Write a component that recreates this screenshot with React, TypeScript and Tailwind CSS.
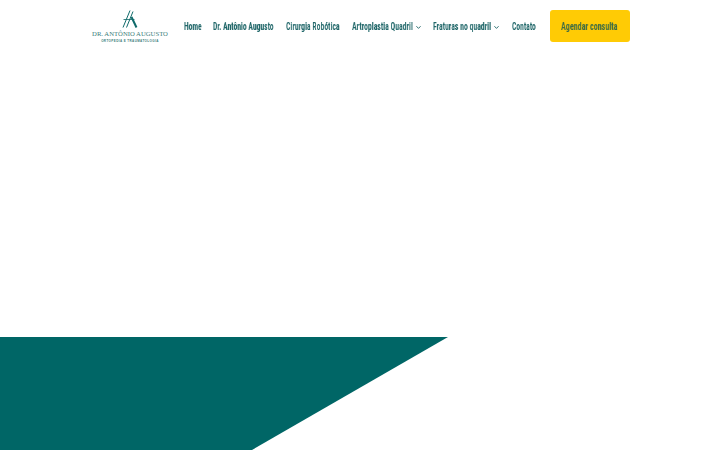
import React from "react";

const font = "[font-family:'Liberation_Sans_Narrow','Roboto_Condensed','Liberation_Sans',sans-serif]";

function Chevron() {
  return (
    <svg width="5" height="5" viewBox="0 0 5 5" className="ml-[3px] mt-[2px] shrink-0" fill="none" stroke="#1f6668" strokeWidth="0.9">
      <path d="M0.4 1.2 L2.5 3.4 L4.6 1.2" />
    </svg>
  );
}

function Logo() {
  return (
    <div className="flex w-[76px] flex-col items-center">
      <svg width="16" height="18" viewBox="0 0 16 18" fill="none" stroke="#0f6a6a">
        <path d="M1 17.5 L8 0.5" strokeWidth="1" />
        <path d="M4.5 17.5 L11 1.5" strokeWidth="1" />
        <path d="M9.5 7 L14.5 17.5" strokeWidth="2" />
        <path d="M1.5 9.5 H12.5" strokeWidth="0.8" />
      </svg>
      <div className="mt-[2px] whitespace-nowrap text-[6.7px] leading-[8px] text-[#3a7d7b] [font-family:'Liberation_Serif',serif]">
        DR. ANTÔNIO AUGUSTO
      </div>
      <div className="mt-[1px] whitespace-nowrap text-[3px] font-bold leading-[4px] tracking-[0.4px] text-[#3a7d7b] [font-family:'Liberation_Sans',sans-serif]">
        ORTOPEDIA E TRAUMATOLOGIA
      </div>
    </div>
  );
}

export default function App() {
  const label = "inline-block origin-left whitespace-nowrap text-[11.5px] font-bold text-[#1f6668] mt-px will-change-transform";
  return (
    <div className={`flex h-[450px] w-[720px] flex-col overflow-hidden bg-white ${font}`}>
      <header className="flex h-[52px] items-start pl-[92px] pt-[10px]">
        <Logo />
        <nav className="ml-[16px] flex h-[32px] items-center">
          <a className="flex w-[18px] items-center"><span className={`${label} scale-x-[.66]`}>Home</span></a>
          <a className="ml-[11px] flex w-[61px] items-center"><span className={`${label} scale-x-[.66]`}>Dr. Antônio Augusto</span></a>
          <a className="ml-[12px] flex w-[54px] items-center"><span className={`${label} scale-x-[.67]`}>Cirurgia Robótica</span></a>
          <a className="ml-[12px] flex w-[61px] items-center"><span className={`${label} scale-x-[.67]`}>Artroplastia Quadril</span></a>
          <Chevron />
          <a className="ml-[12px] flex w-[58px] items-center"><span className={`${label} scale-x-[.67]`}>Fraturas no quadril</span></a>
          <Chevron />
          <a className="ml-[13px] flex w-[24px] items-center"><span className={`${label} scale-x-[.66]`}>Contato</span></a>
        </nav>
        <button className="ml-[14px] flex h-[32px] w-[80px] shrink-0 items-center rounded-[3px] bg-[#ffcb05] pl-[11px]">
          <span className={`${label} scale-x-[.7] !text-[#3d6b45]`}>Agendar consulta</span>
        </button>
      </header>
      <div className="mt-auto h-[113px] w-[448px] bg-[#006666] [clip-path:polygon(0_0,100%_0,56.25%_100%,0_100%)]" />
    </div>
  );
}
